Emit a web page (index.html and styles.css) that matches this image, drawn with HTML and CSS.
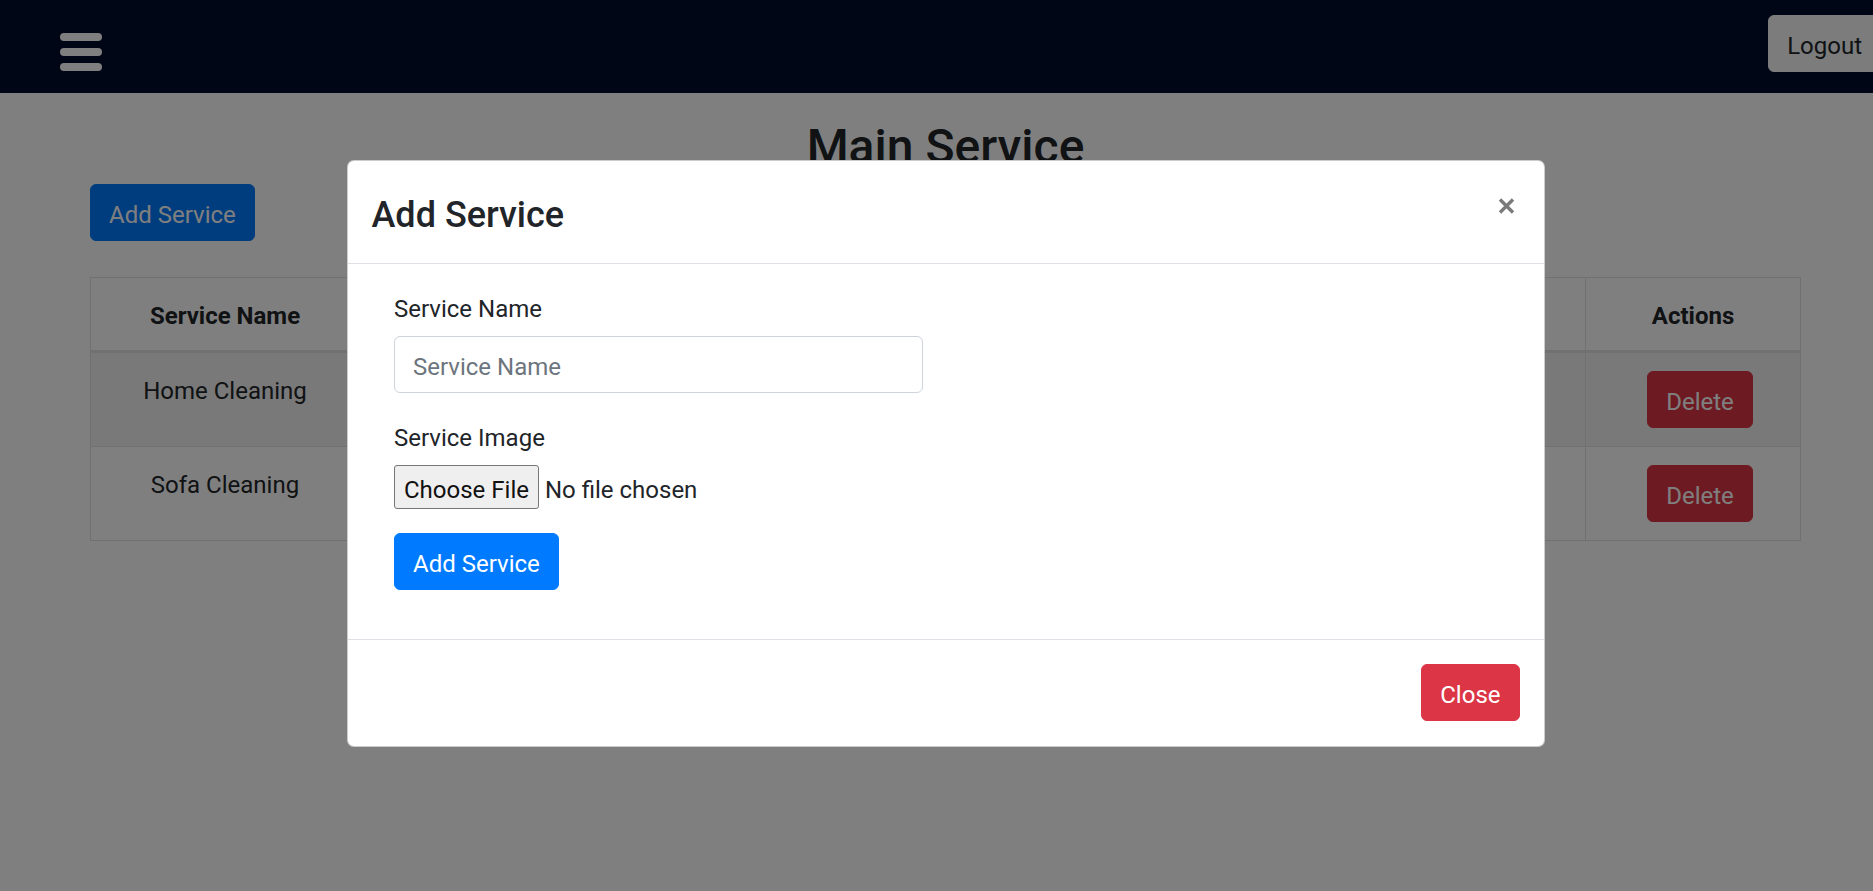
FILE: index.html
```html
<!DOCTYPE html>
<html lang="en">
<head>
<meta charset="utf-8">
<title>Main Service</title>
<link rel="stylesheet" href="styles.css">
</head>
<body>
<div class="page">
  <nav class="topbar">
    <button class="menu-toggle" aria-label="Menu"><span></span><span></span><span></span></button>
    <button class="btn btn-light logout">Logout</button>
  </nav>
  <main class="content">
    <h2 class="page-title">Main Service</h2>
    <div class="toolbar">
      <button class="btn btn-primary">Add Service</button>
    </div>
    <table class="services">
      <colgroup>
        <col class="col-name">
        <col>
        <col class="col-actions">
      </colgroup>
      <thead>
        <tr><th>Service Name</th><th>Service Image</th><th>Actions</th></tr>
      </thead>
      <tbody>
        <tr><td>Home Cleaning</td><td></td><td class="action-cell"><button class="btn btn-danger delete">Delete</button></td></tr>
        <tr><td>Sofa Cleaning</td><td></td><td class="action-cell"><button class="btn btn-danger delete">Delete</button></td></tr>
      </tbody>
    </table>
  </main>

  <div class="backdrop"></div>
  <div class="modal">
    <div class="modal-dialog">
      <div class="modal-content">
        <div class="modal-header">
          <h4 class="modal-title">Add Service</h4>
          <button class="close" aria-label="Close">
            <svg width="17" height="16" viewBox="0 0 17 16"><path d="M2 1.5 L15 14.5 M15 1.5 L2 14.5" stroke="#7a7a7a" stroke-width="3.4" stroke-linecap="butt" fill="none"/></svg>
          </button>
        </div>
        <div class="modal-body">
          <form class="service-form">
            <div class="form-group">
              <label class="form-label">Service Name</label>
              <input class="form-control" type="text" placeholder="Service Name">
            </div>
            <div class="form-group">
              <label class="form-label">Service Image</label>
              <input class="file-input" type="file">
            </div>
            <div class="form-group">
              <button type="button" class="btn btn-primary">Add Service</button>
            </div>
          </form>
        </div>
        <div class="modal-footer">
          <button class="btn btn-danger">Close</button>
        </div>
      </div>
    </div>
  </div>
</div>
</body>
</html>
```

FILE: styles.css
```css
html, body {
  margin: 0;
  padding: 0;
  height: 100%;
  overflow: hidden;
}

body {
  font-family: "Segoe UI", Roboto, "Liberation Sans", sans-serif;
  font-size: 24px;
  line-height: 1.5;
  color: #212529;
  background: #fff;
}

.page {
  position: relative;
  width: 1891px;
  min-height: 891px;
}

/* top bar */
.topbar {
  height: 93px;
  box-sizing: border-box;
  background: #010c2a;
  display: flex;
  justify-content: space-between;
  align-items: flex-start;
  padding: 0 10px 0 60px;
}

.menu-toggle {
  margin-top: 33px;
  padding: 0;
  border: 0;
  background: transparent;
  display: flex;
  flex-direction: column;
  gap: 7.5px;
}

.menu-toggle span {
  display: block;
  width: 42px;
  height: 7.5px;
  border-radius: 4px;
  background: #fff;
}

.logout {
  margin-top: 15px;
}

/* buttons */
.btn {
  display: inline-block;
  box-sizing: border-box;
  height: 57px;
  font-family: inherit;
  font-size: 24px;
  line-height: 36px;
  padding: 12px 18px 7px;
  border: 1px solid transparent;
  border-radius: 6px;
  cursor: pointer;
}

.btn-light {
  background: #f8f9fa;
  border-color: #f8f9fa;
  color: #212529;
}

.btn-primary {
  background: #007bff;
  border-color: #007bff;
  color: #fff;
}

.btn-danger {
  background: #dc3545;
  border-color: #dc3545;
  color: #fff;
}

/* content */
.content {
  padding: 0 90px;
}

.page-title {
  margin: 0 0 9px;
  padding-top: 25.5px;
  font-size: 48px;
  font-weight: 500;
  line-height: 56px;
  text-align: center;
}

.toolbar {
  margin-bottom: 36px;
}

.services {
  width: 100%;
  border-collapse: collapse;
}

.col-name { width: 269px; }
.col-actions { width: 215px; }

.services th,
.services td {
  padding: 20.5px 18px 15.5px;
  border: 1px solid #dee2e6;
  text-align: center;
  vertical-align: top;
}

.services td.action-cell {
  padding: 18px;
}

.services thead th {
  font-weight: 700;
  vertical-align: bottom;
  border-bottom: 3px solid #dee2e6;
}

.services tbody tr:nth-child(odd) {
  background: rgba(0, 0, 0, 0.05);
}

.delete {
  margin-left: 14px;
}

/* modal */
.backdrop {
  position: absolute;
  inset: 0;
  background: rgba(0, 0, 0, 0.5);
}

.modal {
  position: absolute;
  inset: 0;
}

.modal-dialog {
  width: 1198px;
  margin: 160px auto 0;
}

.modal-content {
  background: #fff;
  border: 1px solid rgba(0, 0, 0, 0.2);
  border-radius: 7px;
}

.modal-header {
  display: flex;
  justify-content: space-between;
  align-items: flex-start;
  padding: 24px 24px 21.5px;
  border-bottom: 1px solid #dee2e6;
}

.modal-title {
  margin: 0;
  padding-top: 2.5px;
  font-size: 36px;
  font-weight: 500;
  line-height: 54px;
}

.close {
  margin: 13px 5px 0 0;
  padding: 0;
  border: 0;
  background: transparent;
  line-height: 0;
}

.modal-body {
  padding: 24px 24px 25px;
}

.service-form {
  padding: 0 22.5px;
}

.form-group {
  margin-bottom: 24px;
}

.form-label {
  display: block;
  padding-top: 2.5px;
  margin-bottom: 9.5px;
}

.form-control {
  display: block;
  box-sizing: border-box;
  width: 529px;
  height: 57px;
  padding: 11px 18px 7px;
  font-family: inherit;
  font-size: 24px;
  line-height: 36px;
  color: #495057;
  border: 1px solid #ced4da;
  border-radius: 6px;
  background: #fff;
}

.form-control::placeholder {
  color: #6c757d;
}

.file-input {
  display: block;
  height: 44px;
  font-family: inherit;
  font-size: 24px;
  line-height: 36px;
  color: #212529;
}

.file-input::file-selector-button {
  box-sizing: border-box;
  height: 44px;
  font-family: inherit;
  font-size: 24px;
  padding: 5px 9px 0;
  margin-right: 6px;
  border: 1px solid #767676;
  border-radius: 3px;
  background: #efefef;
  color: #111;
}

.modal-footer {
  display: flex;
  justify-content: flex-end;
  padding: 18px 18px 19px;
  border-top: 1px solid #dee2e6;
}

.modal-footer .btn {
  margin: 6px;
}
```
